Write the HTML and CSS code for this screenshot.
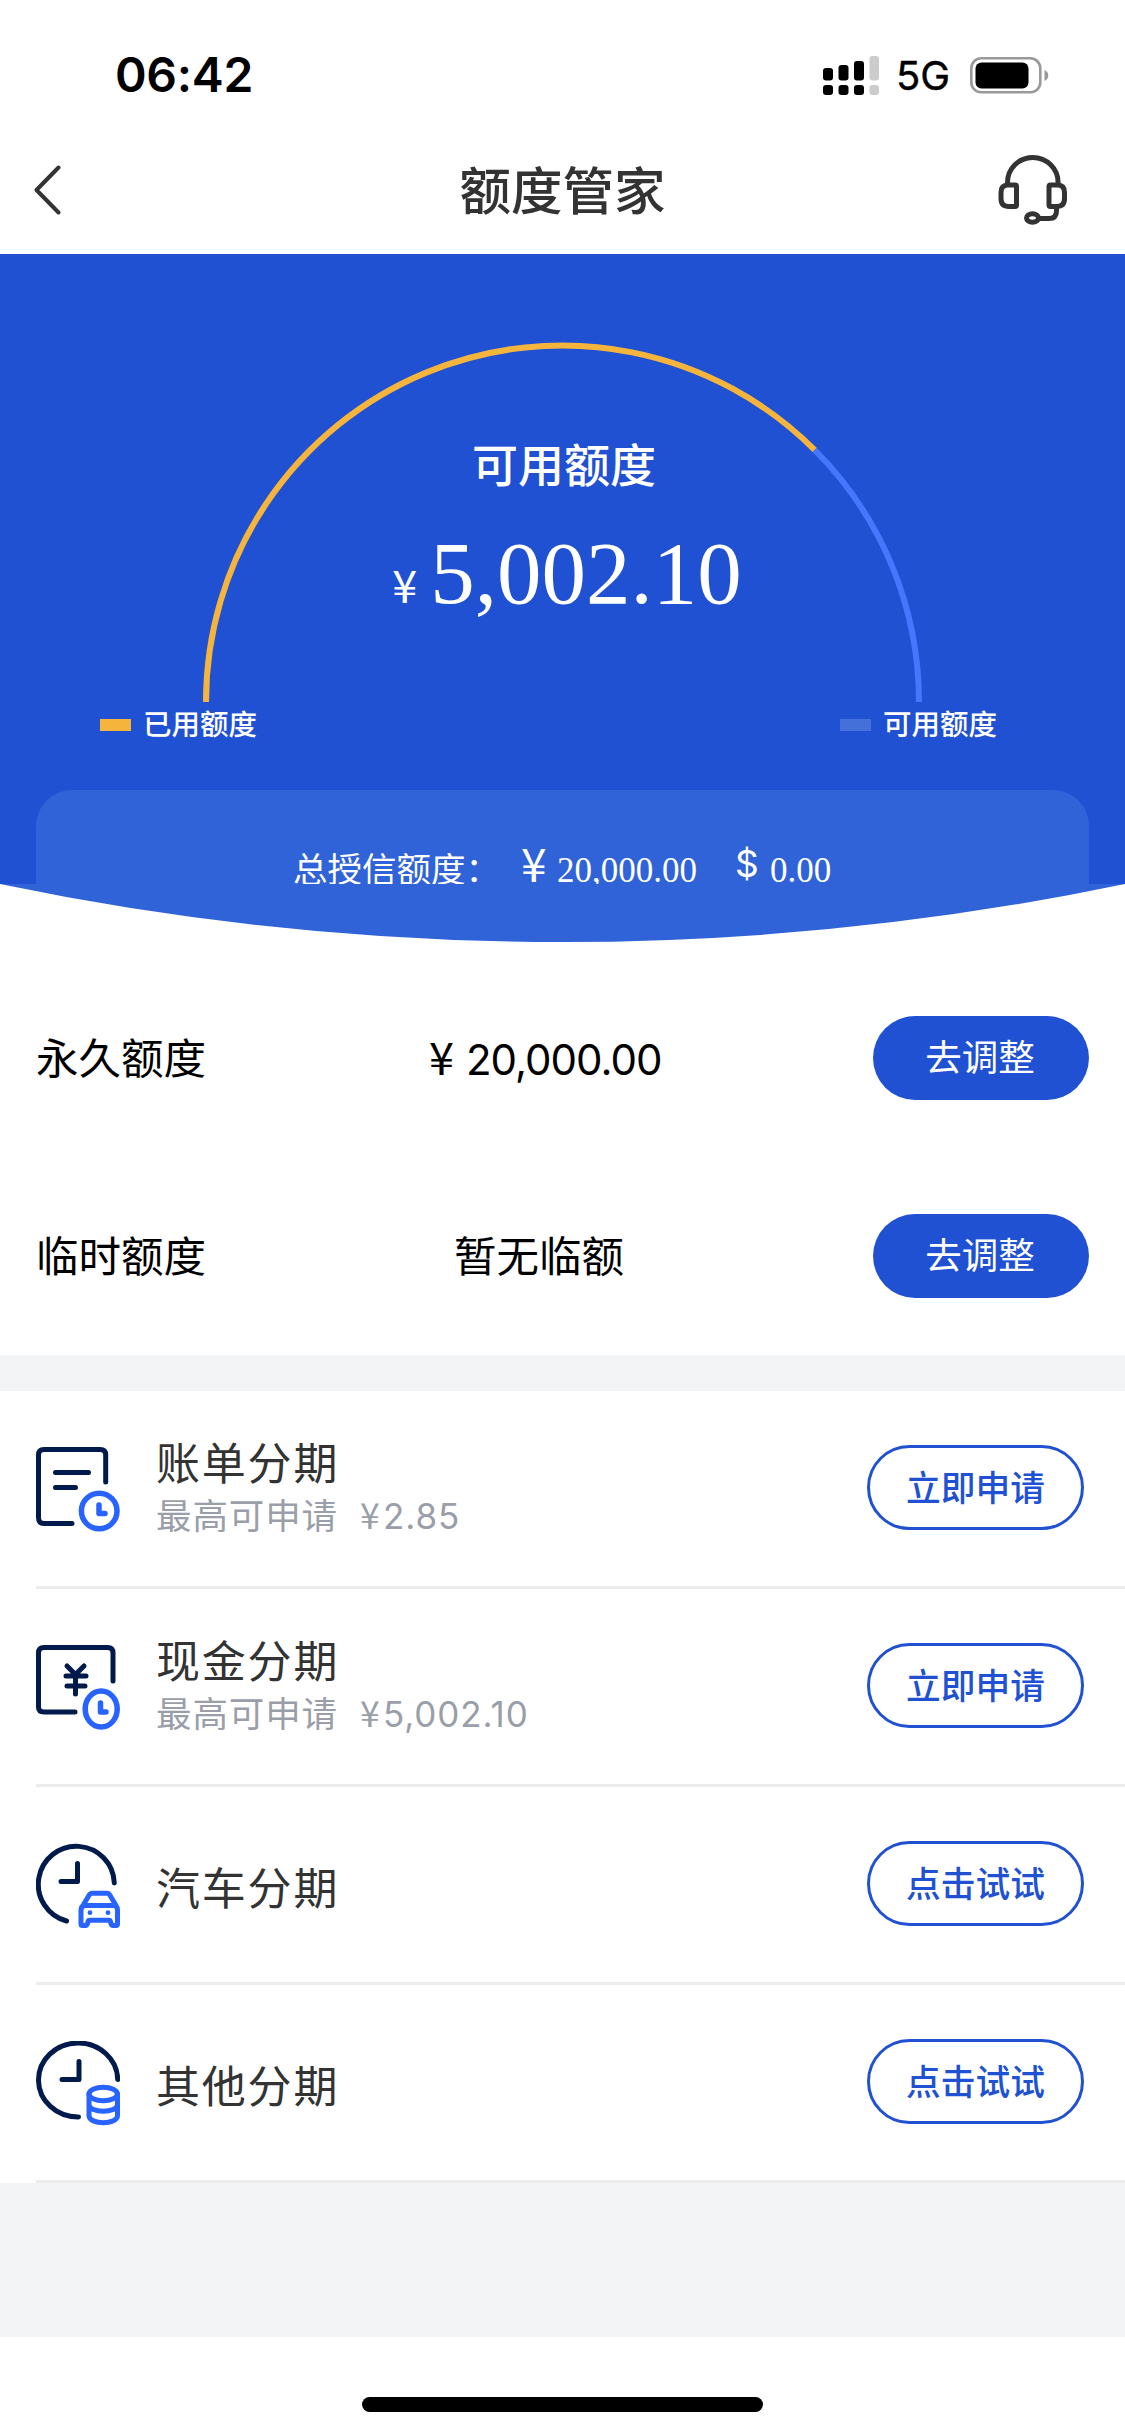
FILE: index.html
```html
<!DOCTYPE html>
<html lang="zh-CN">
<head>
<meta charset="utf-8">
<title>额度管家</title>
<link rel="stylesheet" href="styles.css">
</head>
<body>
<div class="status-bar">
  <span class="time">06:42</span>
  <div class="status-icons">
    <svg class="signal" width="56" height="39" viewBox="0 0 56 39">
      <g fill="#000">
        <rect x="0" y="12" width="10" height="12.500" rx="3"/><rect x="15.500" y="9" width="10" height="15.500" rx="3"/><rect x="31" y="5" width="10" height="19.500" rx="3"/>
        <rect x="0" y="29" width="10" height="10" rx="3"/><rect x="15.500" y="29" width="10" height="10" rx="3"/><rect x="31" y="29" width="10" height="10" rx="3"/>
      </g>
      <g fill="#ccc"><rect x="46.500" y="0" width="9.500" height="24.500" rx="3"/><rect x="46.500" y="29" width="9.500" height="10" rx="3"/></g>
    </svg>
    <span class="network">5G</span>
    <svg class="battery" width="79" height="37" viewBox="0 0 79 37">
      <rect x="1.300" y="1.300" width="69" height="34" rx="10" fill="none" stroke="#999" stroke-width="2.600"/>
      <rect x="5.500" y="5.500" width="53" height="26" rx="6"/>
      <path d="M74.500 13c5 2 5 9 0 11z" fill="#999"/>
    </svg>
  </div>
</div>
<header class="nav">
  <svg class="back" width="28" height="50" viewBox="0 0 28 50"><path d="M24.500 2.500L2.500 25l22 22.500" fill="none" stroke="#333" stroke-width="4" stroke-linecap="round" stroke-linejoin="round"/></svg>
  <h1>额度管家</h1>
  <svg class="service" width="70" height="70" viewBox="0 0 70 70" fill="none" stroke="#333" stroke-width="5">
    <path d="M9.500 29v-1.500a25.300 25 0 0 1 50.600 0v1.500"/>
    <path d="M10 30h7q1.500 0 1.500 1.500v18.500q0 1.500-1.500 1.500h-6q-8 0-8-8v-6q0-7.500 7-7.500z"/>
    <path d="M59.500 30h-7q-1.500 0-1.500 1.500v18.500q0 1.500 1.500 1.500h6q8 0 8-8v-6q0-7.500-7-7.500z"/>
    <path d="M58.500 51v5q0 7.500-7.500 7.500h-9"/><ellipse cx="34.500" cy="63" rx="6" ry="4.200"/>
  </svg>
</header>
<section class="hero">
  <div class="gauge">
    <svg width="1125" height="448" viewBox="0 0 1125 448" fill="none" stroke-width="6">
      <path d="M814.600 195.900A356.500 356.500 0 0 1 919 448" stroke="#4477fb"/>
      <path d="M206 448A356.500 356.500 0 0 1 814.600 195.900" stroke="#f5b43c"/>
    </svg>
    <div class="gauge-text">
      <div class="gauge-label">可用额度</div>
      <div class="gauge-amount"><span class="yen">¥</span><span>5,002.10</span></div>
    </div>
  </div>
  <div class="legend">
    <div class="legend-item"><i class="swatch used"></i>已用额度</div>
    <div class="legend-item"><i class="swatch free"></i>可用额度</div>
  </div>
  <div class="total">
    <span class="total-label">总授信额度：</span>
    <span class="total-yen">¥</span><span class="total-num cny">20,000.00</span>
    <span class="total-usd">$</span><span class="total-num">0.00</span>
  </div>
</section>
<svg class="curve" width="1125" height="58" viewBox="0 0 1125 58"><path d="M0 0A2757 2757 0 0 0 1125 0z" fill="#3063d7"/></svg>
<section class="limits">
  <div class="limit"><span class="name">永久额度</span><span class="value"><span class="value-yen">¥</span><span class="value-num">20,000.00</span></span><button class="adjust">去调整</button></div>
  <div class="limit"><span class="name">临时额度</span><span class="value none">暂无临额</span><button class="adjust">去调整</button></div>
</section>
<ul class="plans">
  <li>
    <svg class="icon" width="84" height="85" viewBox="0 0 84 85">
      <g fill="none" stroke="#001a4c" stroke-width="5" stroke-linecap="round" stroke-linejoin="round">
        <path d="M69.700 35V8q0-5.500-5.500-5.500H8Q2.500 2.500 2.500 8v62.500q0 6 5.500 6h28M19.500 25.500h33M19.500 40.500h20"/></g>
      <g fill="none" stroke="#2862ff" stroke-width="5.500" stroke-linecap="round" stroke-linejoin="round"><circle cx="63.200" cy="64" r="17.800"/><path d="M63 58v8.500h6"/></g>
    </svg>
    <div class="text"><strong>账单分期</strong><small>最高可申请<b>¥</b><em>2.85</em></small></div>
    <button>立即申请</button>
  </li>
  <li>
    <svg class="icon" width="84" height="85" viewBox="0 0 84 85">
      <g fill="none" stroke="#001a4c" stroke-width="5" stroke-linecap="round" stroke-linejoin="round">
        <path d="M77 36V8q0-5.500-5.500-5.500H8Q2.500 2.500 2.500 8v54q0 5 5.500 5h31M31 21l8.500 8.500L48 21M39.500 30v19M30 31h20M31 41h18"/></g>
      <g fill="none" stroke="#2862ff" stroke-width="5.500" stroke-linecap="round" stroke-linejoin="round"><ellipse cx="65.200" cy="64" rx="16" ry="18"/><path d="M64.500 58v9h5.500"/></g>
    </svg>
    <div class="text"><strong>现金分期</strong><small>最高可申请<b>¥</b><em>5,002.10</em></small></div>
    <button>立即申请</button>
  </li>
  <li>
    <svg class="icon" width="84" height="85" viewBox="0 0 84 85">
      <g fill="none" stroke="#001a4c" stroke-width="5" stroke-linecap="round" stroke-linejoin="round">
        <path d="M78.300 40A38 38 0 1 0 30.500 78M41.500 20.500V38.500H25"/></g>
      <g fill="none" stroke="#2862ff" stroke-width="5" stroke-linecap="round" stroke-linejoin="round">
        <path d="M47 62.500L53.500 51.500q.8-1.300 2.500-1.300h15q1.700 0 2.500 1.300L80 62.500M49 62.500h28.500q4 0 4 4.500v14q0 1.500-1.500 1.500h-3q-1.500 0-2-2l-.7-2.500q-.3-.8-1.300-.8h-19.500q-1 0-1.300.8l-.7 2.500q-.5 2-2 2h-3q-1.500 0-1.500-1.500V67q0-4.500 4.500-4.500z"/></g>
      <circle cx="54" cy="69.700" r="2.400" fill="#2862ff"/><circle cx="72" cy="69.700" r="2.400" fill="#2862ff"/>
    </svg>
    <div class="text single"><strong>汽车分期</strong></div>
    <button>点击试试</button>
  </li>
  <li>
    <svg class="icon" width="84" height="85" viewBox="0 0 84 85">
      <g fill="none" stroke="#001a4c" stroke-width="5" stroke-linecap="round" stroke-linejoin="round">
        <path d="M81.700 38.500A39.600 37 0 1 0 42.500 76M43 20.500V38.500H26"/></g>
      <g fill="none" stroke="#2862ff" stroke-width="5" stroke-linecap="round" stroke-linejoin="round">
        <ellipse cx="67.200" cy="53" rx="14.200" ry="6.800"/><path d="M53 53v21.500c0 9.500 28.500 9.500 28.500 0V53M53 63.500c0 9 28.500 9 28.500 0"/></g>
    </svg>
    <div class="text single"><strong>其他分期</strong></div>
    <button>点击试试</button>
  </li>
</ul>
<footer class="home"><div class="home-bar"></div></footer>
</body>
</html>
```
FILE: styles.css
```css
* { box-sizing: border-box; }
body {
  margin: 0;
  width: 1125px;
  height: 2435px;
  display: flex;
  flex-direction: column;
  overflow: hidden;
  background: #f3f4f6;
  color: #000;
  font-family: "Noto Sans CJK SC", sans-serif;
}
svg { display: block; flex: none; }
button { font: inherit; padding: 0; border: 0; }

.status-bar {
  height: 150px;
  padding: 0 76px 0 115px;
  display: flex;
  justify-content: space-between;
  align-items: center;
  background: #fff;
  font-family: Inter, sans-serif;
}
.time { font-size: 48px; font-weight: 600; line-height: 60px; letter-spacing: -.3px; }
.status-icons { display: flex; align-items: center; }
.network { margin: 2px 20px 0 17px; font-size: 40px; line-height: 50px; width: 54px; -webkit-text-stroke: .4px #000; }

.nav {
  height: 104px;
  padding: 0 57px 0 34px;
  display: grid;
  grid-template-columns: 200px 1fr 177px;
  align-items: center;
  background: #fff;
}
.nav svg { margin-top: -24px; }
.service { justify-self: end; }
.nav h1 { margin: -29px 0 0; text-align: center; font-size: 51.500px; line-height: 74px; font-weight: 500; color: #333; }

.hero { height: 630px; flex: none; overflow: hidden; background: #2051d3; color: #fff; }
.gauge { display: grid; }
.gauge > * { grid-area: 1 / 1; }
.gauge-text { padding-top: 175px; text-align: center; }
.gauge-label { padding-left: 3px; font-size: 46px; line-height: 66px; font-weight: 500; }
.gauge-amount { margin-top: 28px; padding-left: 9px; font: 89px/100px "Liberation Serif", serif; }
.gauge-amount .yen { margin-right: 13px; font: 45px/50px "Noto Sans CJK SC", sans-serif; }
.legend { display: flex; justify-content: space-between; padding: 0 128px 0 100px; height: 41px; }
.legend-item { display: flex; align-items: center; font-size: 28.500px; line-height: 40px; font-weight: 500; }
.swatch { width: 31px; height: 12px; margin: 4px 12px 0 0; }
.swatch.used { background: #f5b43c; }
.swatch.free { background: #4471d9; }

.total {
  margin: 47px 36px 0;
  height: 160px;
  padding-top: 42px;
  display: flex;
  align-items: baseline;
  padding-left: 257px;
  border-radius: 36px 36px 0 0;
  background: #3063d7;
  font-size: 34.500px;
  line-height: 60px;
}
.total-label { width: 228px; white-space: nowrap; }
.total-yen { font-size: 46px; width: 36px; }
.total-num { font: 35px/60px "Liberation Serif", serif; }
.total-num.cny { width: 178px; }
.total-usd { align-self: flex-start; font-family: Inter, sans-serif; font-size: 37px; line-height: 64px; width: 35px; }
.curve { width: 1125px; background: #fff; }

.limits { height: 413px; flex: none; padding: 17px 36px 0; background: #fff; }
.limit { height: 198px; display: flex; align-items: center; justify-content: space-between; font-size: 42.500px; line-height: 60px; }
.limit .name { width: 393px; padding-bottom: 5px; }
.value { flex: 1; display: flex; align-items: baseline; }
.value.none { padding: 0 0 5px 25px; }
.value-yen { font-size: 45px; width: 37px; }
.value-num { font-family: Inter, sans-serif; font-size: 42px; letter-spacing: -1px; }
.adjust { width: 216px; height: 84px; padding-right: 2px; border-radius: 42px; background: #2051d3; color: #fff; font-size: 36.500px; line-height: 80px; padding-bottom: 4px; }

.plans { margin: 36px 0 0; padding: 0 0 0 36px; list-style: none; background: #fff; }
.plans li { height: 198px; padding-right: 41px; display: flex; align-items: center; border-bottom: 3px solid #ececec; }
.icon { margin-top: 2px; }
.text { flex: 1; margin-left: 36px; display: flex; flex-direction: column; font-family: Inter, "Noto Sans CJK SC", sans-serif; }
.text.single { padding-top: 9px; }
.text strong { font-size: 44px; font-weight: 400; line-height: 56px; letter-spacing: 1.800px; color: #333; }
.text small { display: flex; align-items: baseline; font-size: 35.500px; line-height: 48px; letter-spacing: .9px; color: #9a9ea9; }
.text b { margin-left: 22px; font-family: "Noto Sans CJK SC", sans-serif; font-weight: 400; line-height: 40px; width: 23px; }
.text em { font: 400 35px/48px Inter, sans-serif; }
.plans button { width: 217px; height: 85px; margin-bottom: 2px; padding-bottom: 3px; border: 3px solid #2051d3; border-radius: 43px; background: #fff; color: #2051d3; font-size: 34.700px; font-weight: 500; line-height: 74px; }

.home { height: 98px; margin-top: auto; padding-top: 60px; background: #fff; }
.home-bar { width: 401px; height: 15px; margin: 0 auto; border-radius: 8px; background: #000; }
```
